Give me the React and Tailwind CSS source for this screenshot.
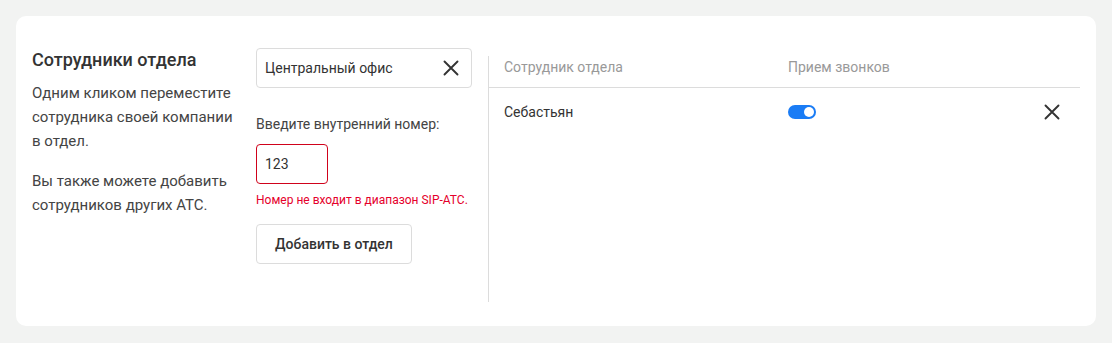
import React from 'react';

const Cross = ({ size = 16 }) => (
  <svg width={size} height={size} viewBox="0 0 16 16" fill="none">
    <path d="M1.5 1.5L14.5 14.5M14.5 1.5L1.5 14.5" stroke="#333" strokeWidth="1.9" strokeLinecap="round" />
  </svg>
);

export default function App() {
  return (
    <div className="min-h-[343px] bg-[#f2f3f2] p-4 font-['Roboto',sans-serif] text-[#333]">
      <div className="flex h-[310px] rounded-[10px] bg-white pt-8 pr-4 pl-4 pb-6">
        <div className="w-[224px] pr-5">
          <h2 className="text-[18px] leading-6 font-medium text-[#333]">Сотрудники отдела</h2>
          <p className="mt-[9px] text-[15px] leading-6 text-[#444]">
            Одним кликом переместите сотрудника своей компании в отдел.
          </p>
          <p className="mt-4 text-[15px] leading-6 text-[#444]">
            Вы также можете добавить сотрудников других АТС.
          </p>
        </div>
        <div className="w-[216px]">
          <div className="flex h-10 items-center justify-between rounded border border-[#dcdcdc] pr-3 pl-2 text-[14px] text-[#333]">
            <span>Центральный офис</span>
            <Cross size={16} />
          </div>
          <div className="mt-[26px] text-[14px] leading-5 text-[#444]">Введите внутренний номер:</div>
          <div className="mt-[10px] flex h-10 w-[72px] items-center rounded border border-[#d0021b] pl-2 text-[14px] text-[#333]">
            123
          </div>
          <div className="mt-2 text-[12px] leading-4 text-[#e5002b]">Номер не входит в диапазон SIP-АТС.</div>
          <button className="mt-4 h-10 w-[156px] rounded border border-[#dcdcdc] text-[14px] font-medium text-[#333]">
            Добавить в отдел
          </button>
        </div>
        <div className="ml-4 mt-2 flex-1 border-l border-[#dcdcdc]">
          <div className="-mt-2 flex h-10 items-center border-b border-[#dcdcdc] pl-[15px] text-[14px] text-[#999]">
            <span className="w-[284px]">Сотрудник отдела</span>
            <span>Прием звонков</span>
          </div>
          <div className="flex h-12 items-center pl-[15px] pr-5 text-[14px] text-[#333]">
            <span className="w-[284px]">Себастьян</span>
            <div className="relative h-[14px] w-7 rounded-full bg-[#1a7cf5]">
              <div className="absolute top-[2px] right-[2px] h-[10px] w-[10px] rounded-full bg-white" />
            </div>
            <div className="ml-auto">
              <Cross size={16} />
            </div>
          </div>
        </div>
      </div>
    </div>
  );
}
